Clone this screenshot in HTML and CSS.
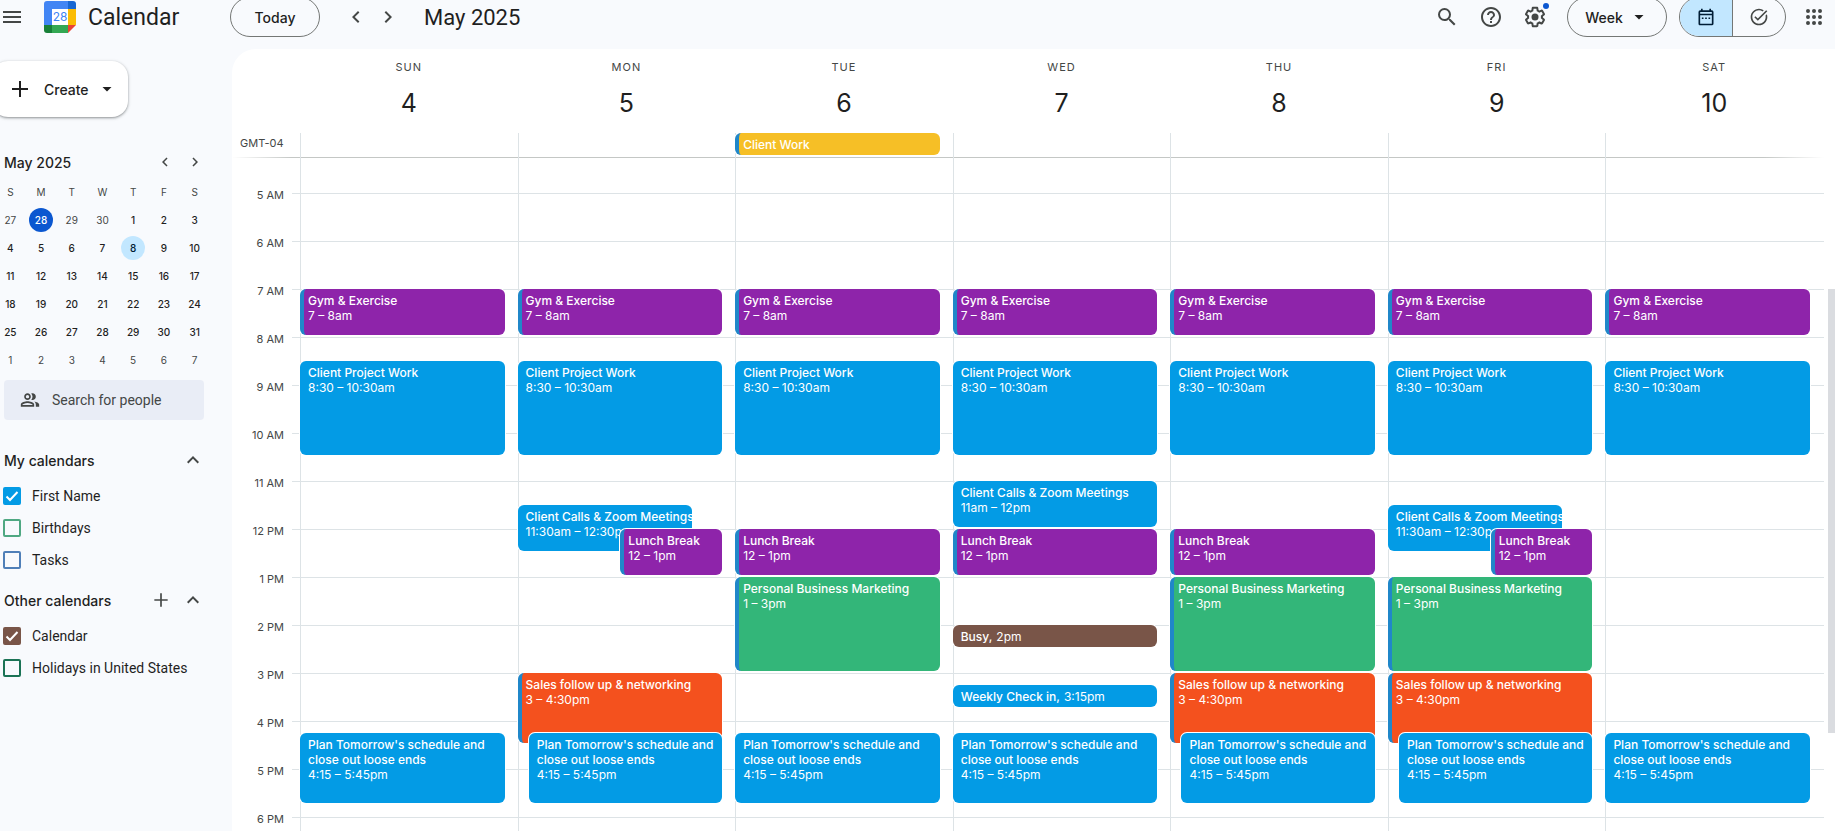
FILE: index.html
```html
<!DOCTYPE html>
<html lang="en">
<head>
    <meta charset="utf-8">
    <title>Calendar - May 2025</title>
    <link rel="stylesheet" href="styles.css">
</head>
<body>
    <header class="topbar">
        <div class="brand">
            <button class="icon-button menu-button" aria-label="Main menu">
                <svg width="24" height="24" viewBox="0 0 24 24"><path d="M3 18h18v-2H3v2zm0-5h18v-2H3v2zm0-7v2h18V6H3z"/></svg>
            </button>
            <svg class="logo" width="32" height="32" viewBox="0 0 32 32">
                <path fill="#4285f4" d="M3 0h21v8H8v16H0V3a3 3 0 0 1 3-3z"/>
                <path fill="#1967d2" d="M24 0h5a3 3 0 0 1 3 3v5h-8z"/>
                <path fill="#fbbc04" d="M24 8h8v16h-8z"/>
                <path fill="#188038" d="M0 24h8v8H3a3 3 0 0 1-3-3z"/>
                <path fill="#34a853" d="M8 24h16v8H8z"/>
                <path fill="#ea4335" d="M24 24h8l-8 8z"/>
                <path fill="#fff" d="M8 8h16v16H8z"/>
                <text class="logo-day" x="16" y="20" text-anchor="middle">28</text>
            </svg>
            <span class="brand-name">Calendar</span>
        </div>

        <div class="period">
            <button class="pill">Today</button>
            <div class="period-nav">
                <button class="icon-button" aria-label="Previous week">
                    <svg width="24" height="24" viewBox="0 0 24 24"><path d="M15.4 7.4 14 6l-6 6 6 6 1.4-1.4-4.6-4.6z"/></svg>
                </button>
                <button class="icon-button" aria-label="Next week">
                    <svg width="24" height="24" viewBox="0 0 24 24"><path d="M10 6 8.600 7.400 13.200 12l-4.600 4.600L10 18l6-6z"/></svg>
                </button>
            </div>
            <h1 class="period-title">May 2025</h1>
        </div>

        <div class="tools">
            <button class="icon-button" aria-label="Search">
                <svg width="24" height="24" viewBox="0 0 24 24"><path d="M15.500 14h-.79l-.28-.27A6.470 6.470 0 0 0 16 9.500 6.500 6.500 0 1 0 9.500 16c1.610 0 3.090-.59 4.230-1.570l.27.28v.79l5 4.990L20.490 19l-4.990-5zm-6 0C7.010 14 5 11.990 5 9.500S7.010 5 9.500 5 14 7.010 14 9.500 11.990 14 9.500 14z"/></svg>
            </button>
            <button class="icon-button" aria-label="Support">
                <svg width="24" height="24" viewBox="0 0 24 24"><path d="M11 18h2v-2h-2v2zm1-16C6.480 2 2 6.480 2 12s4.480 10 10 10 10-4.480 10-10S17.520 2 12 2zm0 18c-4.410 0-8-3.590-8-8s3.590-8 8-8 8 3.590 8 8-3.590 8-8 8zm0-14c-2.210 0-4 1.790-4 4h2c0-1.100.9-2 2-2s2 .9 2 2c0 2-3 1.750-3 5h2c0-2.250 3-2.500 3-5 0-2.210-1.790-4-4-4z"/></svg>
            </button>
            <button class="icon-button settings-button" aria-label="Settings">
                <svg width="24" height="24" viewBox="0 0 24 24"><path d="M13.850 22.250h-3.700c-.74 0-1.360-.54-1.450-1.270l-.27-1.890c-.27-.14-.53-.29-.79-.46l-1.800.72c-.7.26-1.470-.03-1.810-.65L2.200 15.530c-.35-.66-.2-1.440.36-1.880l1.530-1.190c-.01-.15-.02-.3-.02-.46 0-.15.010-.31.020-.46l-1.520-1.190c-.59-.45-.74-1.260-.37-1.880l1.850-3.190c.34-.62 1.110-.9 1.790-.63l1.810.73c.26-.17.52-.32.780-.46l.27-1.910c.09-.7.710-1.250 1.440-1.250h3.700c.74 0 1.360.54 1.450 1.270l.27 1.890c.27.14.53.29.79.46l1.800-.72c.71-.26 1.480.03 1.820.65l1.840 3.180c.36.66.2 1.440-.36 1.880l-1.520 1.190c.01.15.02.3.02.46s-.01.31-.02.46l1.520 1.190c.56.45.72 1.230.37 1.860l-1.860 3.220c-.34.62-1.110.9-1.800.63l-1.800-.72c-.26.17-.52.32-.78.46l-.27 1.910c-.1.680-.72 1.220-1.460 1.220zm-3.230-2h2.760l.37-2.550.53-.22c.44-.18.88-.44 1.340-.78l.45-.34 2.380.96 1.380-2.400-2.030-1.580.07-.56c.03-.26.06-.51.060-.78s-.03-.53-.06-.78l-.07-.56 2.030-1.580-1.390-2.400-2.390.96-.45-.35c-.42-.32-.87-.58-1.330-.77l-.52-.22-.37-2.550h-2.760l-.37 2.550-.53.21c-.44.19-.88.44-1.340.79l-.45.33-2.380-.95-1.390 2.390 2.030 1.580-.07.56a7 7 0 0 0-.06.79c0 .26.020.53.060.78l.07.56-2.030 1.580 1.380 2.400 2.390-.96.45.35c.43.33.86.58 1.330.77l.53.22z"/><circle cx="12" cy="12" r="3.500"/></svg>
                <span class="settings-dot"></span>
            </button>
            <button class="pill view-pill">
                Week
                <svg width="20" height="20" viewBox="0 0 20 20"><path d="m5.500 8 4.500 4.500L14.500 8z"/></svg>
            </button>
            <div class="view-switch">
                <button class="switch-side active" aria-label="Switch to Calendar">
                    <svg width="20" height="20" viewBox="0 0 24 24"><path d="M19 4h-1V2h-2v2H8V2H6v2H5a2 2 0 0 0-2 2v14c0 1.100.9 2 2 2h14a2 2 0 0 0 2-2V6a2 2 0 0 0-2-2zm0 16H5V10h14v10zm0-12H5V6h14v2zM7 12.500h2v2H7zm4 0h2v2h-2zm4 0h2v2h-2z"/></svg>
                </button>
                <button class="switch-side" aria-label="Switch to Tasks">
                    <svg width="20" height="20" viewBox="0 0 24 24"><path d="M22 5.180 10.590 16.600l-4.240-4.240 1.410-1.410 2.830 2.830L20.590 3.770 22 5.180zM19.790 10.220c.13.570.21 1.170.21 1.780 0 4.420-3.580 8-8 8s-8-3.580-8-8 3.580-8 8-8c1.580 0 3.040.46 4.280 1.250l1.440-1.440A9.900 9.900 0 0 0 12 2C6.480 2 2 6.480 2 12s4.480 10 10 10 10-4.480 10-10c0-1.190-.22-2.330-.6-3.390l-1.610 1.610z"/></svg>
                </button>
            </div>
            <button class="icon-button apps-button" aria-label="Google apps">
                <svg width="24" height="24" viewBox="0 0 24 24"><path d="M6 8a2 2 0 1 0 0-4 2 2 0 0 0 0 4zm6 12a2 2 0 1 0 0-4 2 2 0 0 0 0 4zm-6 0a2 2 0 1 0 0-4 2 2 0 0 0 0 4zm0-6a2 2 0 1 0 0-4 2 2 0 0 0 0 4zm6 0a2 2 0 1 0 0-4 2 2 0 0 0 0 4zm4-8a2 2 0 1 0 4 0 2 2 0 0 0-4 0zm-4 2a2 2 0 1 0 0-4 2 2 0 0 0 0 4zm6 6a2 2 0 1 0 0-4 2 2 0 0 0 0 4zm0 6a2 2 0 1 0 0-4 2 2 0 0 0 0 4z"/></svg>
            </button>
        </div>
    </header>

    <div class="layout">
        <aside class="sidebar">
            <button class="create-button">
                <svg width="24" height="24" viewBox="0 0 24 24"><path d="M20 13h-7v7h-2v-7H4v-2h7V4h2v7h7z"/></svg>
                Create
                <svg width="20" height="20" viewBox="0 0 20 20"><path d="m5.500 8 4.500 4.500L14.500 8z"/></svg>
            </button>

            <div class="mini-header">
                <h2>May 2025</h2>
                <button class="icon-button" aria-label="Previous month">
                    <svg width="18" height="18" viewBox="0 0 24 24"><path d="M15.400 7.400 14 6l-6 6 6 6 1.400-1.400-4.600-4.600z"/></svg>
                </button>
                <button class="icon-button" aria-label="Next month">
                    <svg width="18" height="18" viewBox="0 0 24 24"><path d="M10 6 8.600 7.400 13.200 12l-4.600 4.600L10 18l6-6z"/></svg>
                </button>
            </div>
            <table class="mini-calendar">
                <thead>
                    <tr><th>S</th><th>M</th><th>T</th><th>W</th><th>T</th><th>F</th><th>S</th></tr>
                </thead>
                <tbody>
                    <tr><td class="other">27</td><td><span class="today">28</span></td><td class="other">29</td><td class="other">30</td><td>1</td><td>2</td><td>3</td></tr>
                    <tr><td>4</td><td>5</td><td>6</td><td>7</td><td><span class="selected">8</span></td><td>9</td><td>10</td></tr>
                    <tr><td>11</td><td>12</td><td>13</td><td>14</td><td>15</td><td>16</td><td>17</td></tr>
                    <tr><td>18</td><td>19</td><td>20</td><td>21</td><td>22</td><td>23</td><td>24</td></tr>
                    <tr><td>25</td><td>26</td><td>27</td><td>28</td><td>29</td><td>30</td><td>31</td></tr>
                    <tr><td class="other">1</td><td class="other">2</td><td class="other">3</td><td class="other">4</td><td class="other">5</td><td class="other">6</td><td class="other">7</td></tr>
                </tbody>
            </table>

            <div class="people-search">
                <svg width="20" height="20" viewBox="0 0 24 24"><path d="M9 12c2.200 0 4-1.800 4-4s-1.800-4-4-4-4 1.800-4 4 1.800 4 4 4zm0-6a2 2 0 1 1 0 4 2 2 0 0 1 0-4zm0 7.500c-2.700 0-8 1.300-8 4V20h16v-2.500c0-2.700-5.300-4-8-4zM15 18H3v-.5c0-.6 3-2 6-2s6 1.400 6 2zM15 12c2.200 0 4-1.800 4-4s-1.800-4-4-4c-.5 0-1 .1-1.500.3A6 6 0 0 1 15 8a6 6 0 0 1-1.500 3.700c.5.200 1 .3 1.500.3zm2 1.700c1.200.9 2 2.100 2 3.800V20h4v-2.500c0-2.100-3.200-3.400-6-3.800z"/></svg>
                <input type="text" placeholder="Search for people" aria-label="Search for people">
            </div>

            <section class="calendar-list">
                <div class="list-header">
                    <h2>My calendars</h2>
                    <button class="icon-button" aria-label="Collapse my calendars">
                        <svg width="24" height="24" viewBox="0 0 24 24"><path d="m12 8-6 6 1.400 1.400 4.600-4.600 4.600 4.600L18 14z"/></svg>
                    </button>
                </div>
                <label class="list-item"><input type="checkbox" class="check blue" checked>First Name</label>
                <label class="list-item"><input type="checkbox" class="check green">Birthdays</label>
                <label class="list-item"><input type="checkbox" class="check navy">Tasks</label>
            </section>
            <section class="calendar-list">
                <div class="list-header">
                    <h2>Other calendars</h2>
                    <button class="icon-button" aria-label="Add other calendars">
                        <svg width="20" height="20" viewBox="0 0 24 24"><path d="M20 13h-7v7h-2v-7H4v-2h7V4h2v7h7z"/></svg>
                    </button>
                    <button class="icon-button" aria-label="Collapse other calendars">
                        <svg width="24" height="24" viewBox="0 0 24 24"><path d="m12 8-6 6 1.400 1.400 4.600-4.600 4.600 4.600L18 14z"/></svg>
                    </button>
                </div>
                <label class="list-item"><input type="checkbox" class="check brown" checked>Calendar</label>
                <label class="list-item"><input type="checkbox" class="check forest">Holidays in United States</label>
            </section>
        </aside>

        <main class="week">
            <div class="week-content">
                <div class="week-row day-names">
                    <div></div>
                    <div class="day-name">SUN<b>4</b></div>
                    <div class="day-name">MON<b>5</b></div>
                    <div class="day-name">TUE<b>6</b></div>
                    <div class="day-name">WED<b>7</b></div>
                    <div class="day-name">THU<b>8</b></div>
                    <div class="day-name">FRI<b>9</b></div>
                    <div class="day-name">SAT<b>10</b></div>
                </div>
                <div class="week-row all-day">
                    <div class="timezone">GMT-04</div>
                    <div class="all-day-cell"></div>
                    <div class="all-day-cell"></div>
                    <div class="all-day-cell"><button class="event short yellow"><b>Client Work</b></button></div>
                    <div class="all-day-cell"></div>
                    <div class="all-day-cell"></div>
                    <div class="all-day-cell"></div>
                    <div class="all-day-cell"></div>
                </div>

                <!-- Rows are quarter hours, row 1 is 4:15 AM -->
                <div class="week-row time-grid">
                    <div class="hours">
                        <span>5 AM</span>
                        <span>6 AM</span>
                        <span>7 AM</span>
                        <span>8 AM</span>
                        <span>9 AM</span>
                        <span>10 AM</span>
                        <span>11 AM</span>
                        <span>12 PM</span>
                        <span>1 PM</span>
                        <span>2 PM</span>
                        <span>3 PM</span>
                        <span>4 PM</span>
                        <span>5 PM</span>
                        <span>6 PM</span>
                    </div>
                    <div class="day">
                        <button class="event purple" style="grid-row: 12 / span 4"><b>Gym &amp; Exercise</b><span>7 – 8am</span></button>
                        <button class="event" style="grid-row: 18 / span 8"><b>Client Project Work</b><span>8:30 – 10:30am</span></button>
                        <button class="event" style="grid-row: 49 / span 6"><b>Plan Tomorrow's schedule and close out loose ends</b><span>4:15 – 5:45pm</span></button>
                    </div>
                    <div class="day">
                        <button class="event purple" style="grid-row: 12 / span 4"><b>Gym &amp; Exercise</b><span>7 – 8am</span></button>
                        <button class="event" style="grid-row: 18 / span 8"><b>Client Project Work</b><span>8:30 – 10:30am</span></button>
                        <button class="event narrow" style="grid-row: 30 / span 4"><b>Client Calls &amp; Zoom Meetings</b><span>11:30am – 12:30pm</span></button>
                        <button class="event purple half" style="grid-row: 32 / span 4"><b>Lunch Break</b><span>12 – 1pm</span></button>
                        <button class="event orange" style="grid-row: 44 / span 6"><b>Sales follow up &amp; networking</b><span>3 – 4:30pm</span></button>
                        <button class="event stacked" style="grid-row: 49 / span 6"><b>Plan Tomorrow's schedule and close out loose ends</b><span>4:15 – 5:45pm</span></button>
                    </div>
                    <div class="day">
                        <button class="event purple" style="grid-row: 12 / span 4"><b>Gym &amp; Exercise</b><span>7 – 8am</span></button>
                        <button class="event" style="grid-row: 18 / span 8"><b>Client Project Work</b><span>8:30 – 10:30am</span></button>
                        <button class="event purple" style="grid-row: 32 / span 4"><b>Lunch Break</b><span>12 – 1pm</span></button>
                        <button class="event mint" style="grid-row: 36 / span 8"><b>Personal Business Marketing</b><span>1 – 3pm</span></button>
                        <button class="event" style="grid-row: 49 / span 6"><b>Plan Tomorrow's schedule and close out loose ends</b><span>4:15 – 5:45pm</span></button>
                    </div>
                    <div class="day">
                        <button class="event purple" style="grid-row: 12 / span 4"><b>Gym &amp; Exercise</b><span>7 – 8am</span></button>
                        <button class="event" style="grid-row: 18 / span 8"><b>Client Project Work</b><span>8:30 – 10:30am</span></button>
                        <button class="event" style="grid-row: 28 / span 4"><b>Client Calls &amp; Zoom Meetings</b><span>11am – 12pm</span></button>
                        <button class="event purple" style="grid-row: 32 / span 4"><b>Lunch Break</b><span>12 – 1pm</span></button>
                        <button class="event short brown" style="grid-row: 40 / span 2"><b>Busy,</b> 2pm</button>
                        <button class="event short" style="grid-row: 45 / span 2"><b>Weekly Check in,</b> 3:15pm</button>
                        <button class="event" style="grid-row: 49 / span 6"><b>Plan Tomorrow's schedule and close out loose ends</b><span>4:15 – 5:45pm</span></button>
                    </div>
                    <div class="day">
                        <button class="event purple" style="grid-row: 12 / span 4"><b>Gym &amp; Exercise</b><span>7 – 8am</span></button>
                        <button class="event" style="grid-row: 18 / span 8"><b>Client Project Work</b><span>8:30 – 10:30am</span></button>
                        <button class="event purple" style="grid-row: 32 / span 4"><b>Lunch Break</b><span>12 – 1pm</span></button>
                        <button class="event mint" style="grid-row: 36 / span 8"><b>Personal Business Marketing</b><span>1 – 3pm</span></button>
                        <button class="event orange" style="grid-row: 44 / span 6"><b>Sales follow up &amp; networking</b><span>3 – 4:30pm</span></button>
                        <button class="event stacked" style="grid-row: 49 / span 6"><b>Plan Tomorrow's schedule and close out loose ends</b><span>4:15 – 5:45pm</span></button>
                    </div>
                    <div class="day">
                        <button class="event purple" style="grid-row: 12 / span 4"><b>Gym &amp; Exercise</b><span>7 – 8am</span></button>
                        <button class="event" style="grid-row: 18 / span 8"><b>Client Project Work</b><span>8:30 – 10:30am</span></button>
                        <button class="event narrow" style="grid-row: 30 / span 4"><b>Client Calls &amp; Zoom Meetings</b><span>11:30am – 12:30pm</span></button>
                        <button class="event purple half" style="grid-row: 32 / span 4"><b>Lunch Break</b><span>12 – 1pm</span></button>
                        <button class="event mint" style="grid-row: 36 / span 8"><b>Personal Business Marketing</b><span>1 – 3pm</span></button>
                        <button class="event orange" style="grid-row: 44 / span 6"><b>Sales follow up &amp; networking</b><span>3 – 4:30pm</span></button>
                        <button class="event stacked" style="grid-row: 49 / span 6"><b>Plan Tomorrow's schedule and close out loose ends</b><span>4:15 – 5:45pm</span></button>
                    </div>
                    <div class="day">
                        <button class="event purple" style="grid-row: 12 / span 4"><b>Gym &amp; Exercise</b><span>7 – 8am</span></button>
                        <button class="event" style="grid-row: 18 / span 8"><b>Client Project Work</b><span>8:30 – 10:30am</span></button>
                        <button class="event" style="grid-row: 49 / span 6"><b>Plan Tomorrow's schedule and close out loose ends</b><span>4:15 – 5:45pm</span></button>
                    </div>
                </div>
            </div>
            <div class="scroll-track"><div class="scroll-thumb"></div></div>
        </main>
    </div>
</body>
</html>
```
FILE: styles.css
```css
* {
    box-sizing: border-box;
    margin: 0;
    padding: 0;
}

body {
    font-family: Inter, Roboto, sans-serif;
    font-size: 14px;
    color: #1f1f1f;
    background: #f8fafd;
    height: 100vh;
    overflow: hidden;
    display: flex;
    flex-direction: column;
}

button,
input {
    font: inherit;
    color: inherit;
}

button {
    border: none;
    background: none;
    cursor: pointer;
}

h1,
h2 {
    font-weight: 400;
}

svg {
    display: block;
    flex-shrink: 0;
    fill: currentColor;
}

.icon-button {
    display: flex;
    color: #444746;
}

/* Top bar */

.topbar {
    display: flex;
    align-items: center;
    height: 40px;
    margin-top: -3px;
    flex-shrink: 0;
}

.brand {
    display: flex;
    align-items: center;
    flex-shrink: 0;
    width: 230px;
}

.menu-button {
    margin-right: 20px;
}

.logo {
    margin-right: 12px;
}

.logo-day {
    font-size: 12px;
    fill: #4285f4;
}

.brand-name {
    font-family: Roboto, sans-serif;
    font-size: 23px;
}

.period {
    display: flex;
    align-items: center;
    flex: 1;
}

.pill {
    height: 40px;
    width: 90px;
    border: 1px solid #747775;
    border-radius: 20px;
    font-weight: 500;
}

.period-nav {
    display: flex;
    gap: 8px;
    margin: 0 24px;
}

.period-title {
    font-family: Roboto, sans-serif;
    font-size: 22px;
}

.tools {
    display: flex;
    align-items: center;
    padding-right: 9px;
}

.tools .icon-button {
    margin-right: 20px;
}

.tools .apps-button {
    margin-right: 0;
}

.settings-button {
    position: relative;
}

.settings-dot {
    position: absolute;
    top: -2px;
    right: -2px;
    width: 6px;
    height: 6px;
    border-radius: 50%;
    background: #0b57d0;
}

.view-pill {
    display: flex;
    align-items: center;
    justify-content: center;
    gap: 6px;
    width: 100px;
    margin-right: 12px;
}

.view-switch {
    display: flex;
    width: 107px;
    height: 40px;
    margin-right: 16px;
    border: 1px solid #747775;
    border-radius: 20px;
    overflow: hidden;
}

.switch-side {
    flex: 1;
    display: flex;
    align-items: center;
    justify-content: center;
    color: #444746;
}

.switch-side.active {
    color: #001d35;
    background: #c2e7ff;
    border-right: 1px solid #747775;
}

.layout {
    flex: 1;
    min-height: 0;
    display: flex;
    margin-top: 12px;
}

/* Sidebar */

.sidebar {
    width: 232px;
    flex-shrink: 0;
    padding: 12px 28px 0 4px;
}

.create-button {
    display: flex;
    align-items: center;
    width: 136px;
    height: 56px;
    margin-left: -12px;
    padding-left: 16px;
    border-radius: 16px;
    background: #fff;
    box-shadow: 0 1px 2px rgba(60, 64, 67, 0.4), 0 1px 3px 1px rgba(60, 64, 67, 0.15);
    font-weight: 500;
}

.create-button svg:first-child {
    margin-right: 12px;
}

.create-button svg:last-child {
    margin-left: 8px;
}

.mini-header {
    display: flex;
    align-items: center;
    height: 24px;
    margin: 33px -6px 0 0;
}

.mini-header h2 {
    flex: 1;
    font-size: 14px;
    font-weight: 500;
}

.mini-header .icon-button {
    width: 30px;
    justify-content: center;
}

.mini-calendar {
    width: 215px;
    margin: 4px 0 0 -9px;
    border-collapse: collapse;
    table-layout: fixed;
    font-size: 10px;
    font-weight: 500;
    text-align: center;
}

.mini-calendar th,
.mini-calendar td {
    height: 28px;
}

.mini-calendar th,
.mini-calendar .other {
    font-weight: 400;
    color: #444746;
}

.today,
.selected {
    display: block;
    width: 24px;
    margin: 0 auto;
    border-radius: 50%;
    line-height: 24px;
}

.today {
    background: #0b57d0;
    color: #fff;
}

.selected {
    background: #c2e7ff;
    color: #001d35;
}

.people-search {
    display: flex;
    align-items: center;
    gap: 12px;
    height: 40px;
    margin-top: 6px;
    padding-left: 16px;
    border-radius: 4px;
    background: #e9edf6;
    color: #444746;
}

.people-search input {
    width: 100%;
    border: none;
    background: none;
    font-family: Roboto, sans-serif;
}

.people-search input::placeholder {
    color: #444746;
}

.calendar-list {
    margin-top: 20px;
}

.calendar-list + .calendar-list {
    margin-top: 4px;
}

.list-header {
    display: flex;
    align-items: center;
    height: 40px;
    gap: 10px;
    margin-right: -1px;
}

.list-header h2 {
    flex: 1;
    font-size: 14px;
    font-weight: 500;
}

.list-item {
    display: flex;
    align-items: center;
    height: 32px;
    font-family: Roboto, sans-serif;
}

.check {
    appearance: none;
    width: 18px;
    height: 18px;
    margin: 0 11px 0 -1px;
    border: 2px solid;
    border-radius: 2px;
}

.check:checked {
    background: currentColor url("data:image/svg+xml,%3Csvg xmlns='http://www.w3.org/2000/svg' viewBox='0 0 14 14'%3E%3Cpath d='M1.500 7.500l3.500 3.500 7.500-8' fill='none' stroke='%23fff' stroke-width='2'/%3E%3C/svg%3E") center / 14px no-repeat;
}

.check.blue { color: #039be5; }
.check.green { color: #4fa882; }
.check.navy { color: #4f7fb8; }
.check.brown { color: #795548; }
.check.forest { color: #1b7355; }

/* Week view */

.week {
    flex: 1;
    min-width: 0;
    display: flex;
    background: #fff;
    border-radius: 24px 0 0 0;
    overflow: hidden;
}

.week-content {
    flex: 1;
    min-width: 0;
}

.week-row {
    display: grid;
    grid-template-columns: 68px repeat(7, 1fr);
    padding-right: 1px;
}

.day-name {
    padding-top: 10px;
    text-align: center;
    font-size: 11px;
    letter-spacing: 1px;
    line-height: 16px;
    color: #444746;
}

.day-name b {
    display: block;
    margin-top: 12px;
    font-size: 25px;
    font-weight: 400;
    letter-spacing: 0;
    line-height: 32px;
    color: #1f1f1f;
}

.all-day {
    height: 24px;
    margin-top: 14px;
}

.timezone {
    padding-left: 8px;
    font-size: 11px;
    line-height: 20px;
    color: #444746;
}

.all-day-cell {
    display: grid;
    padding-right: 13px;
    border-left: 1px solid #dde3e6;
}

.time-grid {
    background:
        linear-gradient(to right, transparent, #c4c7c5 60px, #c4c7c5 calc(100% - 60px), transparent) 0 0 / 100% 1px no-repeat,
        repeating-linear-gradient(#dde3e6 0 1px, transparent 1px 48px) 60px 36px / 100% 100% no-repeat;
}

.hours {
    display: flex;
    flex-direction: column;
    padding: 28px 16px 0 0;
    font-size: 11px;
    text-align: right;
    color: #444746;
}

.hours span {
    height: 48px;
    line-height: 20px;
}

.day {
    display: grid;
    grid-template-columns: minmax(0, 1fr);
    grid-template-rows: repeat(60, 12px);
    padding-right: 13px;
    border-left: 1px solid #dde3e6;
}

.event {
    grid-column: 1;
    display: flex;
    flex-direction: column;
    align-items: flex-start;
    margin: 0 0 2px -1px;
    padding: 4px 8px;
    overflow: hidden;
    border-radius: 6px;
    background: #039be5;
    box-shadow: 0 0 0 1px #fff;
    font-size: 12px;
    line-height: 15px;
    text-align: left;
    color: #fff;
}

.event b {
    font-weight: 500;
}

.event.short {
    flex-direction: row;
    align-items: center;
    gap: 4px;
    padding: 0 8px;
}

.event.narrow {
    margin-right: 15%;
    white-space: nowrap;
}

.event.half {
    margin-left: 50%;
}

.event.stacked {
    margin-left: 5%;
}

.event.purple,
.event.mint,
.event.orange,
.event.yellow {
    border-left: 4px solid #2087c9;
    padding-left: 4px;
}

.event.purple { background: #8e24aa; }
.event.mint { background: #33b679; }
.event.orange { background: #f4511e; }
.event.yellow { background: #f6bf26; }
.event.brown { background: #795548; }

.scroll-track {
    width: 11px;
    padding: 240px 0 98px 4px;
}

.scroll-thumb {
    height: 100%;
    background: #dadce0;
}
```
